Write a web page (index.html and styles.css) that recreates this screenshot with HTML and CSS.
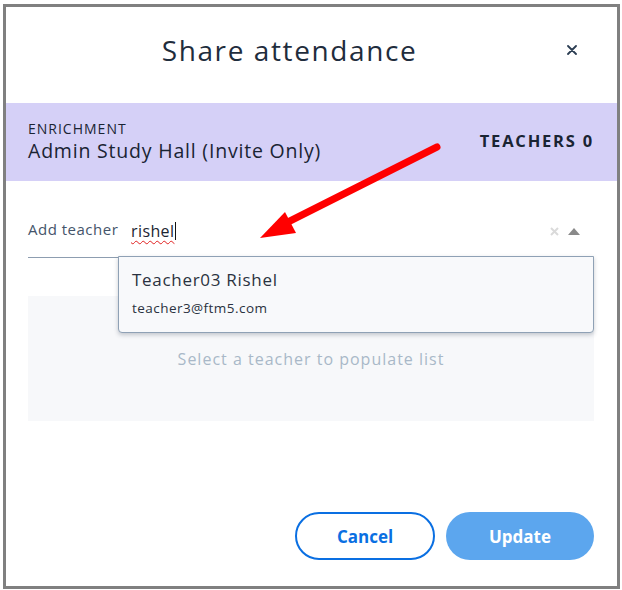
FILE: index.html
```html
<!DOCTYPE html>
<html lang="en">
<head>
<meta charset="utf-8">
<title>Share attendance</title>
<link rel="stylesheet" href="styles.css">
</head>
<body>
<div class="frame">
  <div class="modal">
    <header class="modal-head">
      <span></span>
      <h1 class="title">Share attendance</h1>
      <button class="close" aria-label="Close">
        <svg width="10" height="10" viewBox="0 0 10 10"><path d="M1 1L9 9M9 1L1 9" stroke="#2b3d52" stroke-width="1.8" stroke-linecap="round"/></svg>
      </button>
    </header>
    <section class="band">
      <div class="band-left">
        <div class="band-kicker">ENRICHMENT</div>
        <div class="band-name">Admin Study Hall (Invite Only)</div>
      </div>
      <div class="band-count">TEACHERS 0</div>
    </section>
    <section class="form">
      <div class="field">
        <label class="field-label">Add teacher</label>
        <div class="field-input"><span class="typed">rishel</span><span class="caret"></span></div>
        <div class="field-icons">
          <svg class="clear" width="9" height="9" viewBox="0 0 9 9"><path d="M1 1L8 8M8 1L1 8" stroke="#dadada" stroke-width="2"/></svg>
          <svg class="tri" width="12" height="7" viewBox="0 0 12 7"><path d="M0 7L6 0L12 7Z" fill="#8a8a8a"/></svg>
        </div>
      </div>
      <div class="menu">
        <div class="menu-name">Teacher03 Rishel</div>
        <div class="menu-mail">teacher3@ftm5.com</div>
      </div>
      <div class="list">Select a teacher to populate list</div>
      <div class="actions">
        <button class="btn btn-cancel">Cancel</button>
        <button class="btn btn-update">Update</button>
      </div>
    </section>
  </div>
</div>
<svg class="arrow" width="622" height="590" viewBox="0 0 622 590">
  <line x1="437" y1="147" x2="282" y2="225" stroke="#ff0000" stroke-width="7" stroke-linecap="round"/>
  <polygon points="260,238 285,212 296,233" fill="#ff0000"/>
</svg>
</body>
</html>
```
FILE: styles.css
```css
* { box-sizing: border-box; }
html, body { margin: 0; padding: 0; background: #fff; }
body {
  padding: 4px 0 0 3px;
  font-family: "Open Sans", "Noto Sans", sans-serif;
  color: #1f2d3d;
}
.frame {
  width: 617px;
  height: 585px;
  border: 3px solid #808080;
  background: #fff;
}
.modal { position: relative; height: 100%; }
.modal-head {
  height: 96px;
  display: grid;
  grid-template-columns: 1fr auto 1fr;
  align-items: start;
  padding: 26px 44px 0 0;
}
.title {
  margin: 0;
  font-size: 28px;
  line-height: 34px;
  font-weight: 400;
  color: #1f2d3d;
  letter-spacing: 1.6px;
}
.close {
  justify-self: end;
  margin: 12px -4px 0 0;
  border: 0;
  background: none;
  padding: 0;
  width: 10px;
  height: 10px;
  display: flex;
}
.band {
  height: 78px;
  background: #d5d0f7;
  display: flex;
  align-items: center;
  justify-content: space-between;
  padding: 0 23px 0 22px;
  color: #1a2433;
}
.band-left { padding-top: 0; }
.band-kicker { font-size: 14px; line-height: 16px; letter-spacing: 1px; }
.band-name { font-size: 19.5px; line-height: 24px; font-weight: 500; letter-spacing: 0.8px; margin-top: 2px; }
.band-count { font-size: 16.5px; font-weight: 700; letter-spacing: 1.8px; padding-bottom: 4px; }
.form { position: relative; padding: 24px 23px 0 22px; }
.field {
  height: 53px;
  border-bottom: 1px solid #8d9db0;
  display: flex;
  align-items: center;
}
.field-label { font-size: 15px; color: #44546a; width: 103px; padding-bottom: 4px; letter-spacing: 0.5px; }
.field-input { flex: 1; font-size: 16px; color: #1b2532; display: flex; align-items: center; letter-spacing: 0.4px; }
.typed {
  text-decoration: underline wavy #e02020;
  text-decoration-thickness: 1px;
  text-underline-offset: 3px;
}
.caret { display: inline-block; width: 1px; height: 18px; background: #111; margin-left: 1px; }
.field-icons { display: flex; align-items: center; gap: 9px; padding-right: 14px; }
.menu {
  position: absolute;
  left: 112px;
  right: 23px;
  top: 75px;
  height: 77px;
  background: #f8f9fb;
  border: 1px solid #8fa1b5;
  border-radius: 0 0 4px 4px;
  box-shadow: 0 2px 4px rgba(40, 50, 70, 0.25);
  padding: 11px 13px 0;
}
.menu-name { font-size: 17px; line-height: 24px; color: #2a3240; letter-spacing: 0.7px; }
.menu-mail { font-size: 13.5px; line-height: 18px; color: #2a3240; margin-top: 7px; letter-spacing: 0.45px; }
.list {
  margin-top: 38px;
  height: 125px;
  background: #f7f8fa;
  display: flex;
  align-items: center;
  justify-content: center;
  font-size: 16px;
  color: #a9b8c8;
  letter-spacing: 1px;
}
.actions {
  margin-top: 91px;
  display: flex;
  justify-content: flex-end;
  gap: 11px;
}
.btn {
  height: 48px;
  border-radius: 24px;
  font-family: "Open Sans", "Noto Sans", sans-serif;
  font-size: 17px;
  font-weight: 700;
}
.btn-cancel { width: 140px; background: #fff; border: 2px solid #0a6fe2; color: #0a6fe2; }
.btn-update { width: 148px; background: #5ca6ee; border: 0; color: #fff; }
.arrow { position: absolute; left: 0; top: 0; pointer-events: none; }
```
